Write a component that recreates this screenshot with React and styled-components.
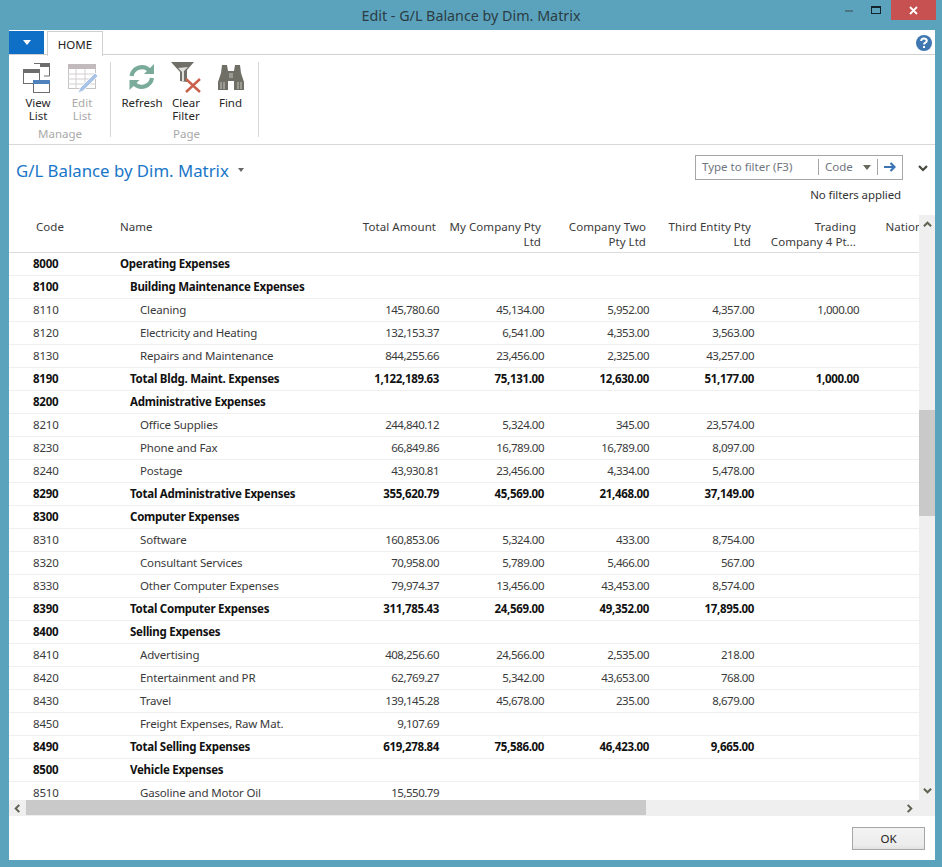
import React from "react";
import styled, { createGlobalStyle } from "styled-components";

const FONT = `"Noto Sans", "Open Sans", sans-serif`;

const COLUMNS = ["Total Amount", "My Company Pty\nLtd", "Company Two\nPty Ltd", "Third Entity Pty\nLtd", "Trading\nCompany 4 Pt...", "National Corp"];

const ROWS = [
  ["8000", "Operating Expenses", 0, true],
  ["8100", "Building Maintenance Expenses", 1, true],
  ["8110", "Cleaning", 2, false, "145,780.60", "45,134.00", "5,952.00", "4,357.00", "1,000.00"],
  ["8120", "Electricity and Heating", 2, false, "132,153.37", "6,541.00", "4,353.00", "3,563.00"],
  ["8130", "Repairs and Maintenance", 2, false, "844,255.66", "23,456.00", "2,325.00", "43,257.00"],
  ["8190", "Total Bldg. Maint. Expenses", 1, true, "1,122,189.63", "75,131.00", "12,630.00", "51,177.00", "1,000.00"],
  ["8200", "Administrative Expenses", 1, true],
  ["8210", "Office Supplies", 2, false, "244,840.12", "5,324.00", "345.00", "23,574.00"],
  ["8230", "Phone and Fax", 2, false, "66,849.86", "16,789.00", "16,789.00", "8,097.00"],
  ["8240", "Postage", 2, false, "43,930.81", "23,456.00", "4,334.00", "5,478.00"],
  ["8290", "Total Administrative Expenses", 1, true, "355,620.79", "45,569.00", "21,468.00", "37,149.00"],
  ["8300", "Computer Expenses", 1, true],
  ["8310", "Software", 2, false, "160,853.06", "5,324.00", "433.00", "8,754.00"],
  ["8320", "Consultant Services", 2, false, "70,958.00", "5,789.00", "5,466.00", "567.00"],
  ["8330", "Other Computer Expenses", 2, false, "79,974.37", "13,456.00", "43,453.00", "8,574.00"],
  ["8390", "Total Computer Expenses", 1, true, "311,785.43", "24,569.00", "49,352.00", "17,895.00"],
  ["8400", "Selling Expenses", 1, true],
  ["8410", "Advertising", 2, false, "408,256.60", "24,566.00", "2,535.00", "218.00"],
  ["8420", "Entertainment and PR", 2, false, "62,769.27", "5,342.00", "43,653.00", "768.00"],
  ["8430", "Travel", 2, false, "139,145.28", "45,678.00", "235.00", "8,679.00"],
  ["8450", "Freight Expenses, Raw Mat.", 2, false, "9,107.69"],
  ["8490", "Total Selling Expenses", 1, true, "619,278.84", "75,586.00", "46,423.00", "9,665.00"],
  ["8500", "Vehicle Expenses", 1, true],
  ["8510", "Gasoline and Motor Oil", 2, false, "15,550.79"],
];

const GlobalStyle = createGlobalStyle`
  html, body { margin: 0; padding: 0; background: #5ba3bd; }
  body { font-family: ${FONT}; font-size: 11.5px; color: #333; }
`;

const Frame = styled.div`
  width: 942px;
  height: 867px;
  display: flex;
  flex-direction: column;
  overflow: hidden;
  background: #5ba3bd;
`;

const TitleBar = styled.div`
  height: 30px;
  flex: none;
  position: relative;
  display: flex;
  justify-content: center;
  align-items: center;
  font-size: 14.3px;
  color: #2b3c44;
`;

const WindowControls = styled.div`
  position: absolute;
  top: 0;
  right: 6px;
  display: flex;
  align-items: flex-start;
`;

const ControlButton = styled.div`
  width: ${(p) => p.$w}px;
  height: 20px;
  display: flex;
  align-items: center;
  justify-content: center;
  background: ${(p) => p.$bg || "transparent"};
`;

const Client = styled.div`
  flex: 1;
  margin: 0 7px 7px 9px;
  background: #fff;
  display: flex;
  flex-direction: column;
  min-height: 0;
`;

const TabStrip = styled.div`
  height: 25px;
  flex: none;
  box-sizing: border-box;
  display: flex;
  align-items: flex-start;
  border-bottom: 1px solid #d0d0d0;
  position: relative;
`;

const AppButton = styled.div`
  width: 35px;
  height: 23px;
  margin-top: 1px;
  background: #0f6fc6;
  display: flex;
  align-items: center;
  justify-content: center;
`;

const Tab = styled.div`
  margin: 1px 0 0 3px;
  width: 54px;
  height: 24px;
  background: #fff;
  border: 1px solid #d0d0d0;
  border-bottom: 0;
  display: flex;
  align-items: center;
  justify-content: center;
  font-size: 11.5px;
  color: #222;
`;

const HelpButton = styled.div`
  margin: 5px 3px 0 auto;
  display: flex;
`;

const Ribbon = styled.div`
  height: 90px;
  flex: none;
  display: flex;
  border-bottom: 1px solid #d8d8d8;
  padding: 7px 0 0 7px;
  box-sizing: border-box;
`;

const RibbonGroup = styled.div`
  display: flex;
  flex-direction: column;
  align-items: stretch;
  height: 75px;
  padding: 0 ${(p) => p.$pr}px 0 ${(p) => p.$pl}px;
  border-right: 1px solid #d6d6d6;
`;

const GroupButtons = styled.div`
  display: flex;
  flex: none;
  height: 65px;
`;

const RibbonButton = styled.div`
  width: ${(p) => p.$w || 44}px;
  display: flex;
  flex-direction: column;
  align-items: center;
  text-align: center;
  line-height: 13px;
  font-size: 11.5px;
  color: ${(p) => (p.$disabled ? "#a9a9a9" : "#262626")};

  svg {
    display: block;
    flex: none;
    margin-bottom: 2px;
  }
`;

const GroupLabel = styled.div`
  flex: none;
  text-align: center;
  font-size: 11.5px;
  line-height: 13px;
  color: #a9a9a9;
`;

const PageHeader = styled.div`
  height: 70px;
  flex: none;
  display: flex;
  position: relative;
  padding: 10px 32px 0 7px;
  box-sizing: border-box;
  justify-content: space-between;
`;

const PageTitle = styled.div`
  display: flex;
  align-items: center;
  height: 30px;
  gap: 9px;
  font-size: 16.8px;
  color: #1976c8;
`;

const FilterColumn = styled.div`
  display: flex;
  flex-direction: column;
  align-items: flex-end;
  gap: 8px;
`;

const FilterBox = styled.div`
  width: 208px;
  height: 25px;
  box-sizing: border-box;
  border: 1px solid #a6a6a6;
  padding-bottom: 1px;
  display: flex;
  align-items: center;
  font-size: 11.5px;
  color: #6f7680;
`;

const FilterInput = styled.div`
  width: 123px;
  padding-left: 6px;
  box-sizing: border-box;
  border-right: 1px solid #a6a6a6;
  line-height: 16px;
`;

const FilterField = styled.div`
  width: 59px;
  padding: 0 6px;
  box-sizing: border-box;
  display: flex;
  align-items: center;
  justify-content: space-between;
  border-right: 1px solid #a6a6a6;
  line-height: 16px;
`;

const FilterGo = styled.div`
  flex: 1;
  display: flex;
  justify-content: center;
`;

const FilterStatus = styled.div`
  font-size: 11.5px;
  line-height: 14px;
  letter-spacing: -0.1px;
  color: #333;
  padding-right: 2px;
`;

const CollapseButton = styled.div`
  position: absolute;
  top: 18px;
  right: 7px;
  display: flex;
`;

const ScrollArea = styled.div`
  height: 601px;
  flex: none;
  display: grid;
  grid-template-columns: 910px 16px;
  grid-template-rows: 585px 16px;
`;

const Viewport = styled.div`
  overflow: hidden;
`;

const GridRow = styled.div`
  display: grid;
  grid-template-columns: 111px 220px 102px repeat(5, 105px);
  width: 958px;
  box-sizing: border-box;
  height: ${(p) => (p.$head ? 38 : 23)}px;
  padding-bottom: ${(p) => (p.$head ? 0 : 2)}px;
  border-bottom: 1px solid ${(p) => (p.$head ? "#dcdcdc" : "#efefef")};
  font-weight: ${(p) => (p.$bold ? 700 : 400)};
  color: ${(p) => (p.$bold ? "#111" : "#3a3a3a")};
  letter-spacing: ${(p) => (p.$head ? 0.05 : p.$bold ? -0.25 : -0.17)}px;
  align-items: ${(p) => (p.$head ? "start" : "center")};
`;

const CodeCell = styled.div`
  padding-left: 24px;
`;

const NameCell = styled.div`
  padding-left: ${(p) => p.$indent * 10}px;
  white-space: nowrap;
`;

const AmountCell = styled.div`
  text-align: right;
  padding-right: 3px;
  white-space: nowrap;
  letter-spacing: ${(p) => (p.$bold ? -0.35 : -0.5)}px;
`;

const HeadLabel = styled.div`
  padding: 4px 0 0 ${(p) => p.$pl || 0}px;
  line-height: 15px;
  white-space: nowrap;
`;

const HeadCell = styled(HeadLabel)`
  text-align: right;
  padding-right: 6px;
  white-space: pre;
`;

const VScroll = styled.div`
  grid-row: 1 / 3;
  grid-column: 2;
  background: #efefef;
  display: flex;
  flex-direction: column;
  align-items: center;
  justify-content: space-between;
  position: relative;
  padding: 5px 0 21px;
  box-sizing: border-box;
`;

const VThumb = styled.div`
  position: absolute;
  top: 195px;
  left: 0;
  width: 16px;
  height: 106px;
  background: #c9c9c9;
`;

const HScroll = styled.div`
  background: #efefef;
  display: flex;
  align-items: center;
  position: relative;
  padding: 0 5px 0 4px;
  box-sizing: border-box;
  justify-content: space-between;
`;

const HThumb = styled.div`
  position: absolute;
  left: 17px;
  top: 0;
  bottom: 1px;
  width: 620px;
  background: #c9c9c9;
`;

const Footer = styled.div`
  flex: 1;
  display: flex;
  justify-content: flex-end;
  align-items: flex-start;
  padding: 11px 10px 0 0;
`;

const OkButton = styled.div`
  width: 73px;
  height: 23px;
  box-sizing: border-box;
  border: 1px solid #a6a6a6;
  background: linear-gradient(#f3f3f3, #ececec 80%, #e2e2e2);
  display: flex;
  align-items: center;
  justify-content: center;
  font-size: 11.5px;
  color: #222;
`;

const ChevronSvg = styled.svg`
  position: relative;
  z-index: 1;
`;

function Chevron({ dir = "down", size = 9, color = "#5c6350" }) {
  const paths = {
    up: "M1 7 L5 3 L9 7",
    down: "M1 3 L5 7 L9 3",
    left: "M7 1 L3 5 L7 9",
    right: "M3 1 L7 5 L3 9",
  };
  return (
    <ChevronSvg width={size} height={size} viewBox="0 0 10 10">
      <path d={paths[dir]} fill="none" stroke={color} strokeWidth="2.2" />
    </ChevronSvg>
  );
}

function ViewListIcon() {
  return (
    <svg width="32" height="32" viewBox="0 0 32 32">
      <path d="M12 1.5 H27.5 V14 H22" fill="none" stroke="#6d6d6d" />
      <rect x="18" y="1" width="10" height="4" fill="#6d6d6d" />
      <rect x="1.5" y="7.5" width="16" height="14" fill="#fff" stroke="#6d6d6d" />
      <rect x="1" y="7" width="17" height="4" fill="#6d6d6d" />
      <rect x="11.5" y="18.5" width="16" height="12" fill="#fff" stroke="#6d6d6d" />
      <rect x="11" y="18" width="17" height="4" fill="#4f81bd" />
    </svg>
  );
}

function EditListIcon() {
  return (
    <svg width="32" height="32" viewBox="0 0 32 32">
      <rect x="2.5" y="2.5" width="27" height="24" fill="#fff" stroke="#c8c4c4" />
      <rect x="2" y="2" width="28" height="5" fill="#c2babd" />
      <path d="M2 12H30M2 17H30M2 22H30M10 7V27M19 7V27" stroke="#d2cfcf" fill="none" />
      <path d="M12 31 L14 26 L29 11 L32 14 L17 29 Z" fill="#a9c4e6" stroke="#fff" strokeWidth="0.8" />
    </svg>
  );
}

function RefreshIcon() {
  return (
    <svg width="32" height="32" viewBox="0 0 32 32">
      <path d="M5.5 14 A10.5 10.5 0 0 1 23 8" fill="none" stroke="#79aa9a" strokeWidth="4.2" />
      <path d="M18 12 H28 V2 Z" fill="#79aa9a" />
      <path d="M26 16 A10.5 10.5 0 0 1 8.5 22" fill="none" stroke="#79aa9a" strokeWidth="4.2" />
      <path d="M13.5 18 H3.5 V28 Z" fill="#79aa9a" />
    </svg>
  );
}

function ClearFilterIcon() {
  return (
    <svg width="32" height="32" viewBox="0 0 32 32">
      <path d="M1 0 H24 L17 8 V20 L10 19 V10 Z" fill="#707068" />
      <path d="M8 6 L12 10 V19 H14 V9 L18 5 Z" fill="#dededa" />
      <path d="M16 17 L30 30 M30 17 L16 30" stroke="#c9604c" strokeWidth="2.4" />
    </svg>
  );
}

function BinocularsIcon() {
  return (
    <svg width="32" height="32" viewBox="0 0 32 32">
      <path d="M7 3 H12 L13 9 H19 L20 3 H25 L26 11 L29 20 V28 H19 V19 H13 V28 H3 V20 L6 11 Z" fill="#6f6f66" />
      <path d="M6 20 V27 M9 20 V27 M23 20 V27 M26 20 V27" stroke="#c9c9c4" strokeWidth="1" />
      <rect x="14" y="11" width="4" height="5" fill="#9a9a92" />
    </svg>
  );
}

function HelpIcon() {
  return (
    <svg width="16" height="16" viewBox="0 0 16 16">
      <circle cx="8" cy="8" r="8" fill="#3f78b0" />
      <path d="M5.2 6 C5.2 2.8 10.8 2.8 10.8 5.8 C10.8 7.8 8 7.6 8 9.6" fill="none" stroke="#fff" strokeWidth="2" />
      <rect x="7" y="11" width="2" height="2" fill="#fff" />
    </svg>
  );
}

export default function App() {
  return (
    <Frame>
      <GlobalStyle />
      <TitleBar>
        Edit - G/L Balance by Dim. Matrix
        <WindowControls>
          <ControlButton $w={24}>
            <svg width="8" height="3"><rect width="8" height="2" y="1" fill="#4d7583" /></svg>
          </ControlButton>
          <ControlButton $w={30}>
            <svg width="10" height="8"><rect x="0.5" y="0.5" width="9" height="7" fill="none" stroke="#14232b" /><rect width="10" height="2" fill="#14232b" /></svg>
          </ControlButton>
          <ControlButton $w={45} $bg="#c75050">
            <svg width="9" height="9" viewBox="0 0 9 9"><path d="M1 1L8 8M8 1L1 8" stroke="#fff" strokeWidth="1.8" /></svg>
          </ControlButton>
        </WindowControls>
      </TitleBar>
      <Client>
        <TabStrip>
          <AppButton>
            <svg width="8" height="5"><path d="M0 0H8L4 5Z" fill="#fff" /></svg>
          </AppButton>
          <Tab>HOME</Tab>
          <HelpButton><HelpIcon /></HelpButton>
        </TabStrip>
        <Ribbon>
          <RibbonGroup $pl={0} $pr={6}>
            <GroupButtons>
              <RibbonButton><ViewListIcon />View<br />List</RibbonButton>
              <RibbonButton $disabled><EditListIcon />Edit<br />List</RibbonButton>
            </GroupButtons>
            <GroupLabel>Manage</GroupLabel>
          </RibbonGroup>
          <RibbonGroup $pl={9} $pr={5}>
            <GroupButtons>
              <RibbonButton><RefreshIcon />Refresh</RibbonButton>
              <RibbonButton><ClearFilterIcon />Clear<br />Filter</RibbonButton>
              <RibbonButton $w={45}><BinocularsIcon />Find</RibbonButton>
            </GroupButtons>
            <GroupLabel>Page</GroupLabel>
          </RibbonGroup>
        </Ribbon>
        <PageHeader>
          <PageTitle>
            G/L Balance by Dim. Matrix
            <svg width="6" height="4"><path d="M0 0H6L3 4Z" fill="#666" /></svg>
          </PageTitle>
          <FilterColumn>
            <FilterBox>
              <FilterInput>Type to filter (F3)</FilterInput>
              <FilterField>
                Code
                <svg width="8" height="5"><path d="M0 0H8L4 5Z" fill="#666a5c" /></svg>
              </FilterField>
              <FilterGo>
                <svg width="12" height="10" viewBox="0 0 12 10"><path d="M0 5H10M6.5 1L10.5 5L6.5 9" fill="none" stroke="#3a74b4" strokeWidth="2.2" /></svg>
              </FilterGo>
            </FilterBox>
            <FilterStatus>No filters applied</FilterStatus>
          </FilterColumn>
          <CollapseButton><Chevron dir="down" size={10} color="#44483c" /></CollapseButton>
        </PageHeader>
        <ScrollArea>
          <Viewport>
            <GridRow $head>
              <HeadLabel $pl={27}>Code</HeadLabel>
              <HeadLabel>Name</HeadLabel>
              {COLUMNS.map((c) => (
                <HeadCell key={c}>{c}</HeadCell>
              ))}
            </GridRow>
            {ROWS.map(([code, name, indent, bold, ...values]) => (
              <GridRow key={code} $bold={bold}>
                <CodeCell>{code}</CodeCell>
                <NameCell $indent={indent}>{name}</NameCell>
                {COLUMNS.map((c, i) => (
                  <AmountCell key={c} $bold={bold}>{values[i]}</AmountCell>
                ))}
              </GridRow>
            ))}
          </Viewport>
          <VScroll>
            <VThumb />
            <Chevron dir="up" />
            <Chevron dir="down" />
          </VScroll>
          <HScroll>
            <HThumb />
            <Chevron dir="left" />
            <Chevron dir="right" />
          </HScroll>
        </ScrollArea>
        <Footer>
          <OkButton>OK</OkButton>
        </Footer>
      </Client>
    </Frame>
  );
}
